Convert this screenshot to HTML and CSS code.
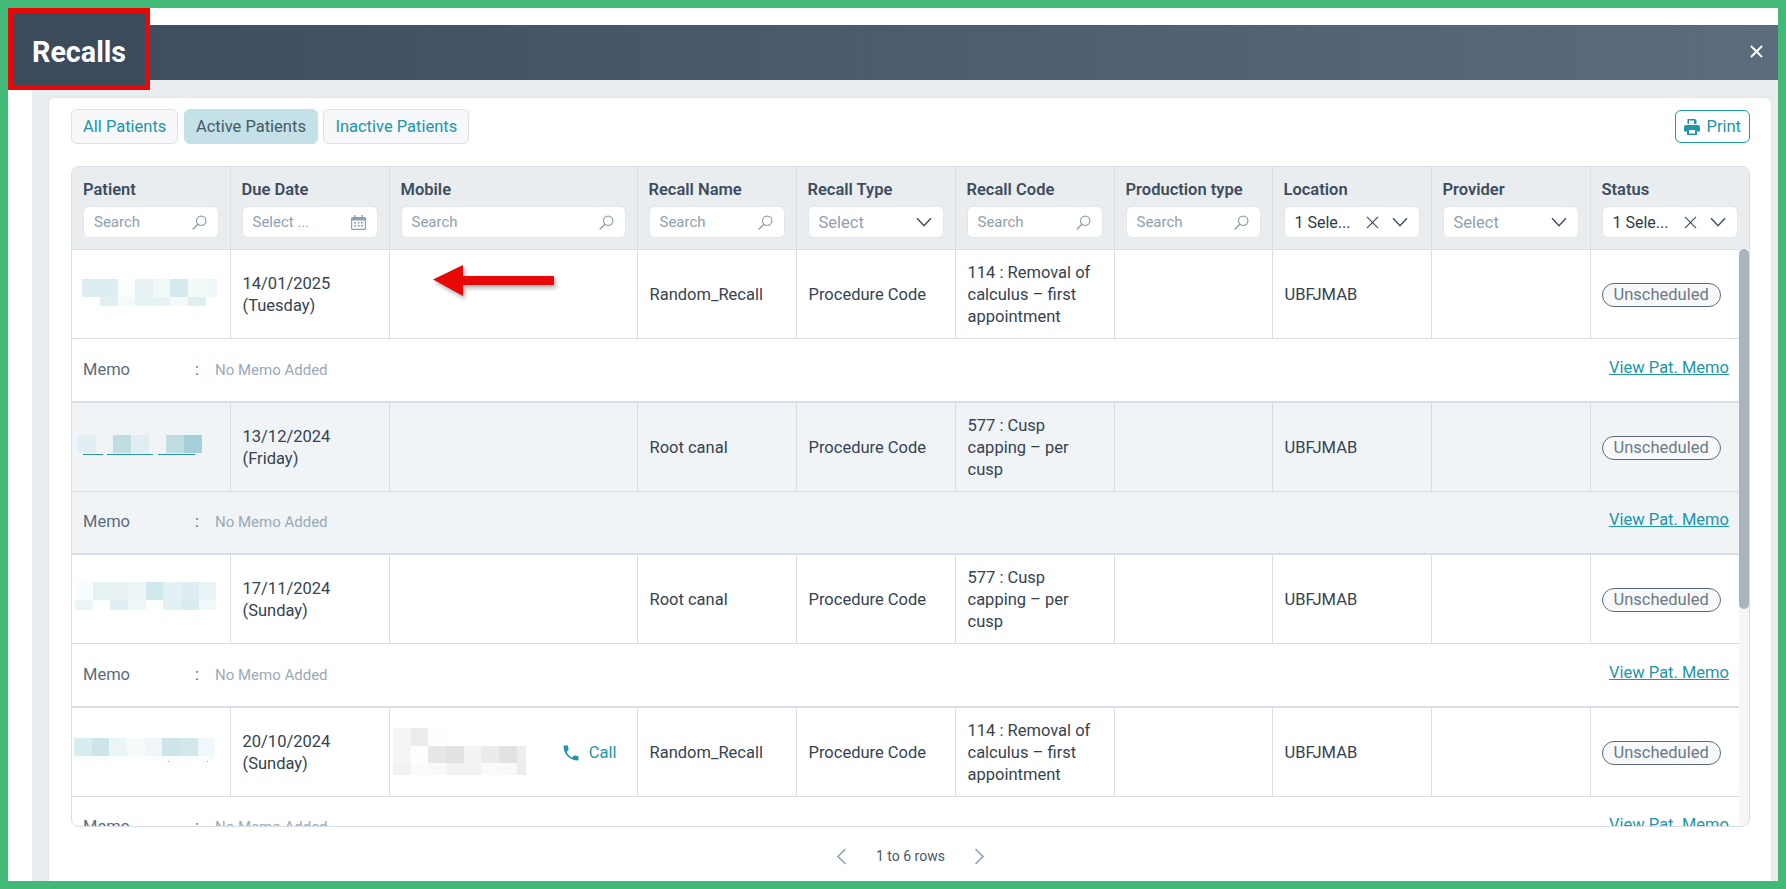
FILE: index.html
```html
<!DOCTYPE html>
<html lang="en">
<head>
  <meta charset="UTF-8">
  <meta name="viewport" content="width=device-width, initial-scale=1.0">
  <title>Recalls</title>
  <link rel="stylesheet" href="styles.css">
</head>
<body>
  <svg class="icon-sprite" aria-hidden="true">
    <symbol id="i-search" viewBox="0 0 16 16">
      <circle cx="9.8" cy="6.2" r="5" fill="none" stroke="currentColor" stroke-width="1.3"/>
      <path d="M6.2 9.8 1.2 15" fill="none" stroke="currentColor" stroke-width="1.5" stroke-linecap="round"/>
    </symbol>
    <symbol id="i-chevron" viewBox="0 0 16 10">
      <path d="M1 1.2 8 8.8 15 1.2" fill="none" stroke="currentColor" stroke-width="1.4"/>
    </symbol>
    <symbol id="i-cross" viewBox="0 0 14 14">
      <path d="M1 1 13 13M13 1 1 13" fill="none" stroke="currentColor" stroke-width="1.2"/>
    </symbol>
    <symbol id="i-phone" viewBox="0 0 24 24">
      <path fill="currentColor" d="M6.62 10.79c1.44 2.83 3.76 5.14 6.59 6.59l2.2-2.2c.27-.27.67-.36 1.02-.24 1.12.37 2.33.57 3.57.57.55 0 1 .45 1 1V20c0 .55-.45 1-1 1-9.39 0-17-7.61-17-17 0-.55.45-1 1-1h3.5c.55 0 1 .45 1 1 0 1.25.2 2.45.57 3.57.11.35.03.74-.25 1.02l-2.2 2.2z"/>
    </symbol>
  </svg>

  <header class="modal-header">
    <h1 class="modal-title">Recalls</h1>
    <button class="close-btn" aria-label="Close">
      <svg width="13" height="13" viewBox="0 0 13 13"><path d="M1 1 12 12M12 1 1 12" fill="none" stroke="#fff" stroke-width="1.9"/></svg>
    </button>
  </header>

  <main class="modal-body">
    <section class="card">
      <svg class="red-arrow" width="130" height="40" viewBox="0 0 130 40">
        <path d="M2 15.500 32 1V12H123V21H32V32Z" fill="#e90808"/>
      </svg>

      <div class="toolbar">
        <button class="tab">All Patients</button>
        <button class="tab active">Active Patients</button>
        <button class="tab">Inactive Patients</button>
        <button class="print-btn">
          <svg width="16" height="16" viewBox="0 0 16 16">
            <path fill="currentColor" d="M3.500 0H11l1.500 1.500V5h-9zM2 6h12a2 2 0 0 1 2 2v4.500h-3V16H3v-3.500H0V8a2 2 0 0 1 2-2z"/>
            <path fill="#fff" d="M5 11h6v3.500H5zM5 1.500h5V5H5z"/>
          </svg>
          Print
        </button>
      </div>

      <div class="grid-wrap">
        <table class="grid">
          <colgroup>
            <col class="col-first"><col class="col-std"><col class="col-mobile"><col class="col-std"><col class="col-std">
            <col class="col-std"><col class="col-first"><col class="col-std"><col class="col-std"><col class="col-std">
          </colgroup>
          <thead>
            <tr>
              <th><div class="th-label">Patient</div><div class="filter"><span class="placeholder">Search</span><svg class="ico-search"><use href="#i-search"/></svg></div></th>
              <th><div class="th-label">Due Date</div><div class="filter"><span class="placeholder">Select ...</span>
                <svg class="ico-cal" viewBox="0 0 15 15">
                  <path fill="currentColor" d="M3 0h1.500v2h6V0H12v2h1.500A1.500 1.500 0 0 1 15 3.500V13.500A1.500 1.500 0 0 1 13.500 15H1.500A1.500 1.500 0 0 1 0 13.500V3.500A1.500 1.500 0 0 1 1.500 2H3z"/>
                  <path fill="#fff" d="M1.200 5.500h12.600v8.300H1.200z"/>
                  <path fill="currentColor" d="M3 7h2v1.500H3zM6.500 7h2v1.500h-2zM10 7h2v1.500h-2zM3 10h2v1.500H3zM6.500 10h2v1.500h-2zM10 10h2v1.500h-2z"/>
                </svg></div></th>
              <th><div class="th-label">Mobile</div><div class="filter"><span class="placeholder">Search</span><svg class="ico-search"><use href="#i-search"/></svg></div></th>
              <th><div class="th-label">Recall Name</div><div class="filter"><span class="placeholder">Search</span><svg class="ico-search"><use href="#i-search"/></svg></div></th>
              <th><div class="th-label">Recall Type</div><div class="filter"><span class="placeholder select">Select</span><svg class="ico-chevron"><use href="#i-chevron"/></svg></div></th>
              <th><div class="th-label">Recall Code</div><div class="filter"><span class="placeholder">Search</span><svg class="ico-search"><use href="#i-search"/></svg></div></th>
              <th><div class="th-label">Production type</div><div class="filter"><span class="placeholder">Search</span><svg class="ico-search"><use href="#i-search"/></svg></div></th>
              <th><div class="th-label">Location</div><div class="filter"><span class="chosen">1 Sele...</span><svg class="ico-cross"><use href="#i-cross"/></svg><svg class="ico-chevron"><use href="#i-chevron"/></svg></div></th>
              <th><div class="th-label">Provider</div><div class="filter"><span class="placeholder select">Select</span><svg class="ico-chevron"><use href="#i-chevron"/></svg></div></th>
              <th><div class="th-label">Status</div><div class="filter"><span class="chosen">1 Sele...</span><svg class="ico-cross"><use href="#i-cross"/></svg><svg class="ico-chevron"><use href="#i-chevron"/></svg></div></th>
            </tr>
          </thead>
          <tbody>
            <tr class="main-row">
              <td class="blur-cell">
                <svg class="mosaic" width="158" height="88" viewBox="0 0 158 88">
                  <rect x="10" y="29" width="36" height="18" fill="#deedf1"/><rect x="46" y="29" width="18" height="18" fill="#fcfefe"/><rect x="63" y="29" width="18" height="18" fill="#e5f1f3"/><rect x="81" y="29" width="17" height="18" fill="#f1f8fa"/><rect x="98" y="29" width="18" height="18" fill="#d6eaee"/><rect x="116" y="29" width="18" height="18" fill="#f2f9f9"/><rect x="134" y="29" width="11" height="18" fill="#eff7f9"/>
                  <rect x="28" y="47" width="18" height="9" fill="#e3f0f2"/><rect x="46" y="47" width="17" height="9" fill="#f4fafa"/><rect x="63" y="47" width="35" height="9" fill="#e6f2f4"/><rect x="98" y="47" width="18" height="9" fill="#f4fafa"/><rect x="116" y="47" width="18" height="9" fill="#e1eff3"/>
                </svg>
              </td>
              <td>14/01/2025<br>(Tuesday)</td>
              <td></td>
              <td>Random_Recall</td>
              <td>Procedure Code</td>
              <td>114 : Removal of calculus – first appointment</td>
              <td></td>
              <td>UBFJMAB</td>
              <td></td>
              <td><span class="status">Unscheduled</span></td>
            </tr>
            <tr class="memo-row">
              <td colspan="10"><div class="memo"><span class="memo-label">Memo</span><span class="memo-sep">:</span><span class="memo-text">No Memo Added</span><a class="memo-link" href="#">View Pat. Memo</a></div></td>
            </tr>

            <tr class="main-row alt">
              <td class="blur-cell">
                <svg class="mosaic" width="158" height="88" viewBox="0 0 158 88">
                  <rect x="6" y="32" width="18" height="18" fill="#e2eef2"/><rect x="41" y="32" width="18" height="18" fill="#c0dde2"/><rect x="59" y="32" width="18" height="18" fill="#e1edf0"/><rect x="94" y="32" width="18" height="18" fill="#c0dde2"/><rect x="112" y="32" width="18" height="18" fill="#a6d0d9"/>
                  <path d="M11 51.500H31M35 51.500H81M86 51.500H123" stroke="#2b93a5" stroke-width="1.200"/>
                </svg>
              </td>
              <td>13/12/2024<br>(Friday)</td>
              <td></td>
              <td>Root canal</td>
              <td>Procedure Code</td>
              <td>577 : Cusp capping – per cusp</td>
              <td></td>
              <td>UBFJMAB</td>
              <td></td>
              <td><span class="status">Unscheduled</span></td>
            </tr>
            <tr class="memo-row alt">
              <td colspan="10"><div class="memo"><span class="memo-label">Memo</span><span class="memo-sep">:</span><span class="memo-text">No Memo Added</span><a class="memo-link" href="#">View Pat. Memo</a></div></td>
            </tr>

            <tr class="main-row">
              <td class="blur-cell">
                <svg class="mosaic" width="158" height="88" viewBox="0 0 158 88">
                  <rect x="3" y="27" width="18" height="18" fill="#f7fcfd"/><rect x="21" y="27" width="17" height="18" fill="#e4f2f4"/><rect x="38" y="27" width="18" height="18" fill="#e8f2f5"/><rect x="56" y="27" width="18" height="18" fill="#edf5f7"/><rect x="74" y="27" width="17" height="18" fill="#d0e8ec"/><rect x="91" y="27" width="18" height="18" fill="#e4f1f3"/><rect x="109" y="27" width="18" height="18" fill="#deedf1"/><rect x="127" y="27" width="17" height="18" fill="#e9f4f5"/>
                  <rect x="3" y="45" width="18" height="10" fill="#ebf5f8"/><rect x="38" y="45" width="18" height="10" fill="#dfeef1"/><rect x="56" y="45" width="18" height="10" fill="#edf6f8"/><rect x="74" y="45" width="17" height="10" fill="#fbfefd"/><rect x="91" y="45" width="18" height="10" fill="#e3f0f4"/><rect x="109" y="45" width="18" height="10" fill="#dbecf0"/><rect x="127" y="45" width="17" height="10" fill="#f1f8fa"/>
                </svg>
              </td>
              <td>17/11/2024<br>(Sunday)</td>
              <td></td>
              <td>Root canal</td>
              <td>Procedure Code</td>
              <td>577 : Cusp capping – per cusp</td>
              <td></td>
              <td>UBFJMAB</td>
              <td></td>
              <td><span class="status">Unscheduled</span></td>
            </tr>
            <tr class="memo-row">
              <td colspan="10"><div class="memo"><span class="memo-label">Memo</span><span class="memo-sep">:</span><span class="memo-text">No Memo Added</span><a class="memo-link" href="#">View Pat. Memo</a></div></td>
            </tr>

            <tr class="main-row">
              <td class="blur-cell">
                <svg class="mosaic" width="158" height="88" viewBox="0 0 158 88">
                  <rect x="2" y="30" width="18" height="18" fill="#d9edef"/><rect x="20" y="30" width="17" height="18" fill="#cbe5e8"/><rect x="37" y="30" width="18" height="18" fill="#ebf5f6"/><rect x="55" y="30" width="18" height="18" fill="#f5fbfb"/><rect x="73" y="30" width="17" height="18" fill="#f0f6f8"/><rect x="90" y="30" width="18" height="18" fill="#cde5e9"/><rect x="108" y="30" width="18" height="18" fill="#d2e8ea"/><rect x="126" y="30" width="17" height="18" fill="#f1f8fb"/>
                  <rect x="2" y="48" width="141" height="5" fill="#f9fdfd"/>
                  <rect x="96" y="53" width="1" height="1" fill="#5fb2c0"/><rect x="135" y="53" width="1" height="1" fill="#5fb2c0"/>
                </svg>
              </td>
              <td>20/10/2024<br>(Sunday)</td>
              <td class="blur-cell">
                <div class="mobile-cell">
                  <svg class="mosaic" width="140" height="88" viewBox="0 0 140 88">
                    <rect x="3" y="20" width="18" height="18" fill="#f5f5f5"/><rect x="21" y="20" width="17" height="18" fill="#ececec"/><rect x="38" y="20" width="18" height="18" fill="#fdfefe"/>
                    <rect x="3" y="38" width="18" height="17" fill="#f4f5f5"/><rect x="21" y="38" width="17" height="17" fill="#fdfefe"/><rect x="38" y="38" width="18" height="17" fill="#e6e7e9"/><rect x="56" y="38" width="18" height="17" fill="#e0e2e3"/><rect x="74" y="38" width="17" height="17" fill="#f2f4f4"/><rect x="91" y="38" width="18" height="17" fill="#eaebed"/><rect x="109" y="38" width="18" height="17" fill="#e1e3e3"/><rect x="127" y="38" width="9" height="17" fill="#eeeeee"/>
                    <rect x="3" y="55" width="18" height="12" fill="#f2f2f2"/><rect x="21" y="55" width="17" height="12" fill="#fbfbfb"/><rect x="38" y="55" width="18" height="12" fill="#f9f9f9"/><rect x="56" y="55" width="35" height="12" fill="#f1f2f2"/><rect x="91" y="55" width="18" height="12" fill="#fafafa"/><rect x="109" y="55" width="18" height="12" fill="#f8f9f9"/><rect x="127" y="55" width="9" height="12" fill="#ededed"/>
                  </svg>
                  <a class="call-link" href="#"><svg class="ico-phone"><use href="#i-phone"/></svg>Call</a>
                </div>
              </td>
              <td>Random_Recall</td>
              <td>Procedure Code</td>
              <td>114 : Removal of calculus – first appointment</td>
              <td></td>
              <td>UBFJMAB</td>
              <td></td>
              <td><span class="status">Unscheduled</span></td>
            </tr>
            <tr class="memo-row">
              <td colspan="10"><div class="memo"><span class="memo-label">Memo</span><span class="memo-sep">:</span><span class="memo-text">No Memo Added</span><a class="memo-link" href="#">View Pat. Memo</a></div></td>
            </tr>
          </tbody>
        </table>
        <div class="scroll-track"><div class="scroll-thumb"></div></div>
      </div>

      <div class="pager">
        <svg width="11" height="17" viewBox="0 0 11 17"><path d="M9.500 1 2 8.500 9.500 16" fill="none" stroke="#8fa3b3" stroke-width="1.600"/></svg>
        <span>1 to 6 rows</span>
        <svg width="11" height="17" viewBox="0 0 11 17"><path d="M1.500 1 9 8.500 1.500 16" fill="none" stroke="#8fa3b3" stroke-width="1.600"/></svg>
      </div>
    </section>
  </main>
</body>
</html>
```

FILE: styles.css
```css
* {
  margin: 0;
  padding: 0;
  box-sizing: border-box;
  font-family: 'Roboto', 'Liberation Sans', sans-serif;
}

body {
  display: flex;
  flex-direction: column;
  width: 100%;
  height: 100vh;
  padding-top: 17px;
  background: #fff;
  border: 8px solid #42b977;
  overflow: hidden;
}

.icon-sprite {
  display: none;
}

/* header */
.modal-header {
  display: flex;
  flex: none;
  justify-content: space-between;
  align-items: center;
  height: 55px;
  background: linear-gradient(90deg, #3c4c5d, #5c6c7d);
}

.modal-title {
  position: relative;
  z-index: 2;
  align-self: flex-start;
  width: 142px;
  height: 82px;
  margin-top: -17px;
  padding: 23px 0 0 19px;
  background: #3b4b5c;
  border: 5px solid #e90808;
  color: #fff;
  font-size: 28.7px;
  font-weight: 700;
  line-height: 32px;
}

.close-btn {
  display: flex;
  margin: 0 15px 2px 0;
  background: none;
  border: none;
}

/* body */
.modal-body {
  display: flex;
  flex: 1;
  min-height: 0;
  margin-left: 24px;
  padding: 17px 6px 0 16px;
  background: #e9edf0;
}

.card {
  position: relative;
  display: flex;
  flex: 1;
  flex-direction: column;
  min-width: 0;
  padding: 11px 21px 0 22px;
  background: #fff;
  border: 1px solid #dfe4e8;
  border-bottom: none;
  border-radius: 6px 6px 0 0;
}

.red-arrow {
  position: absolute;
  top: 166px;
  left: 382px;
  z-index: 3;
  filter: drop-shadow(2px 3px 2px rgba(0, 0, 0, 0.3));
}

.toolbar {
  display: flex;
  flex: none;
  align-items: center;
  gap: 5.5px;
  height: 35px;
  margin-bottom: 22px;
}

.tab {
  height: 35px;
  padding: 0 11px;
  background: #f6f8fa;
  border: 1px solid #dde2e8;
  border-radius: 6px;
  color: #2096a8;
  font-size: 16.5px;
}

.tab.active {
  background: #c3e1e6;
  border-color: #c3e1e6;
  color: #46586a;
}

.print-btn {
  display: flex;
  align-items: center;
  gap: 6px;
  height: 33px;
  margin-left: auto;
  padding: 0 8px;
  background: #fff;
  border: 1px solid #1c98ab;
  border-radius: 6px;
  color: #2096a8;
  font-size: 16.5px;
}

/* table */
.grid-wrap {
  position: relative;
  flex: none;
  height: 661px;
  border: 1px solid #d8dde6;
  border-radius: 8px;
  overflow: hidden;
}

.grid {
  width: 100%;
  table-layout: fixed;
  border-collapse: collapse;
  color: #35434f;
  font-size: 16.5px;
  line-height: 22px;
}

.col-first {
  width: 158px;
}

.col-std {
  width: 159px;
}

.col-mobile {
  width: 248px;
}

.grid th {
  height: 82px;
  padding: 12px 11px 11px;
  background: #e9edf0;
  border-right: 1px solid #d8dde6;
  border-bottom: 1px solid #d8dde6;
  text-align: left;
  vertical-align: top;
}

.grid th:last-child,
.grid td:last-child {
  border-right: none;
}

.th-label {
  margin-bottom: 5px;
  color: #3d4d5e;
  font-size: 16.5px;
  font-weight: 600;
  white-space: nowrap;
}

.filter {
  display: flex;
  align-items: center;
  height: 32px;
  padding: 0 11px 0 10px;
  background: #fff;
  border: 1px solid #e3e7eb;
  border-radius: 6px;
  font-weight: 400;
}

.placeholder {
  flex: 1;
  color: #8fa0ae;
  font-size: 15px;
}

.placeholder.select {
  padding-top: 2px;
  font-size: 16.5px;
}

.chosen {
  flex: 1;
  padding-top: 2px;
  color: #2b3a48;
  font-size: 16px;
  white-space: nowrap;
}

.ico-search {
  width: 15px;
  height: 15px;
  color: #8fa0ae;
}

.ico-cal {
  width: 15px;
  height: 15px;
  color: #8fa0ae;
}

.ico-chevron {
  width: 16px;
  height: 10px;
  color: #3d4d5e;
}

.ico-cross {
  width: 13px;
  height: 13px;
  margin-right: 13px;
  color: #3d4d5e;
}

.grid td {
  padding: 0 11px 0 12px;
  border-right: 1px solid #d8dde6;
  border-bottom: 1px solid #d8dde6;
  vertical-align: middle;
}

.main-row td {
  height: 89px;
  padding-top: 2px;
}

.grid .memo-row td {
  height: 63px;
  padding-left: 11px;
  border-right: none;
  border-bottom: 2px solid #d8dde6;
}

.alt td {
  background: #f0f4f7;
}

.grid td.blur-cell {
  padding: 0;
}

.mosaic {
  display: block;
}

.mobile-cell {
  display: flex;
  justify-content: space-between;
  align-items: center;
  padding-right: 20px;
}

.call-link {
  display: flex;
  align-items: center;
  gap: 8px;
  margin-top: 2px;
  color: #2096a8;
  text-decoration: none;
}

.ico-phone {
  width: 20px;
  height: 20px;
  margin-left: -3px;
}

.status {
  display: inline-block;
  margin-left: -1px;
  padding: 0 11px;
  background: #f6f8fa;
  border: 1px solid #5b6b7c;
  border-radius: 12px;
  color: #6b7a88;
  font-size: 16.5px;
}

.memo {
  display: flex;
  align-items: center;
  padding-right: 9px;
}

.memo-label {
  width: 112px;
  color: #5b6b7c;
}

.memo-sep {
  width: 20px;
  color: #5b6b7c;
}

.memo-text {
  flex: 1;
  color: #9aaab6;
  font-size: 15px;
}

.memo-link {
  margin-bottom: 4px;
  color: #2096a8;
}

.scroll-track {
  position: absolute;
  top: 82px;
  right: 0;
  bottom: 0;
  width: 10px;
  background: #f4f6f8;
}

.scroll-thumb {
  height: 360px;
  background: #a9b4be;
  border-radius: 5px;
}

.pager {
  display: flex;
  flex: none;
  justify-content: center;
  align-items: center;
  gap: 29px;
  margin-top: 18px;
  color: #46586a;
  font-size: 14px;
  line-height: 22px;
}
```
